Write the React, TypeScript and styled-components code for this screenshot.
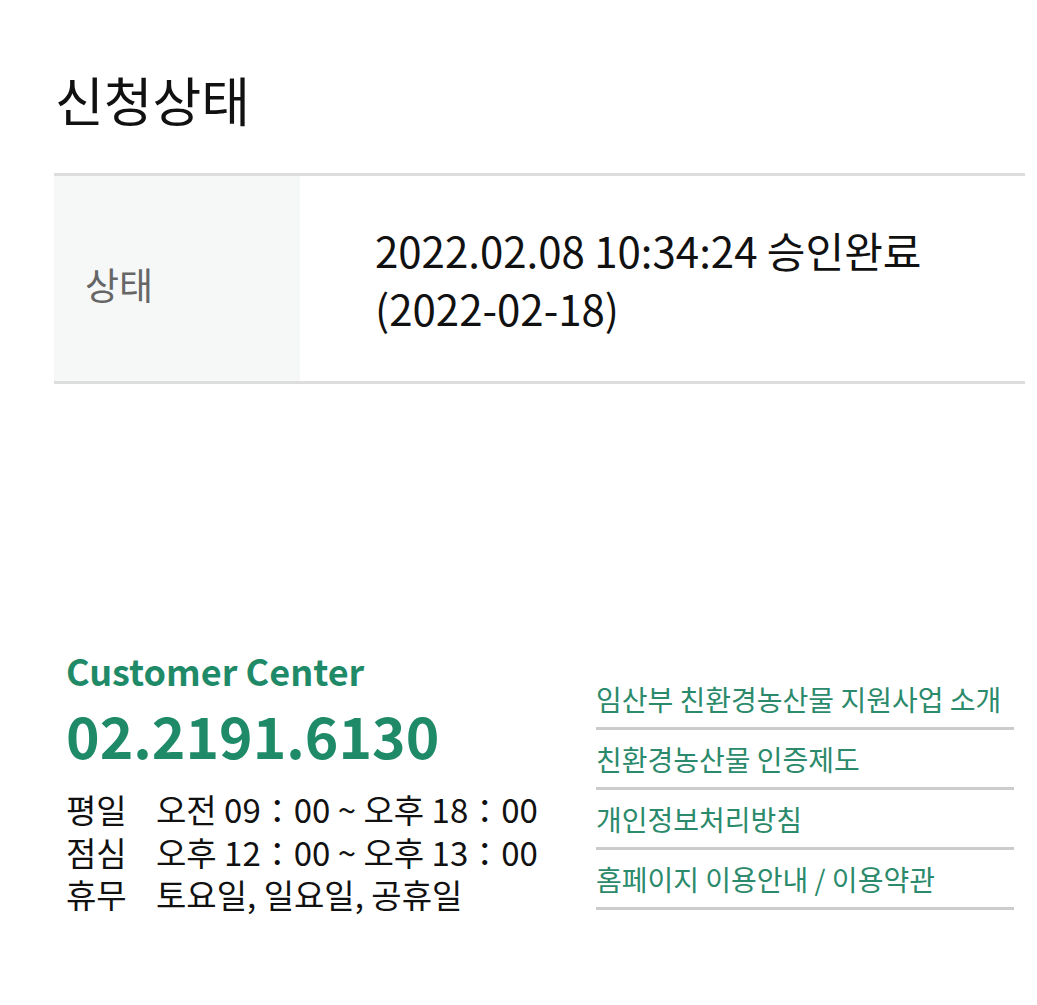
import React from 'react'
import styled, { createGlobalStyle } from 'styled-components'

const GlobalStyle = createGlobalStyle`
  body {
    margin: 0;
    background: #fff;
    font-family: "Noto Sans CJK KR", "Noto Sans", sans-serif;
    color: #111;
  }
`

const links = [
  '임산부 친환경농산물 지원사업 소개',
  '친환경농산물 인증제도',
  '개인정보처리방침',
  '홈페이지 이용안내 / 이용약관',
]

const hours = [
  { label: '평일', value: '오전 09：00 ~ 오후 18：00' },
  { label: '점심', value: '오후 12：00 ~ 오후 13：00' },
  { label: '휴무', value: '토요일, 일요일, 공휴일' },
]

const App = () => {
  return (
    <>
      <GlobalStyle />
      <Page>
        <Title>신청상태</Title>
        <StatusTable>
          <LabelCell>상태</LabelCell>
          <ValueCell>
            2022.02.08 10:34:24 승인완료
            <br />
            (2022-02-18)
          </ValueCell>
        </StatusTable>

        <Footer>
          <Contact>
            <CenterName>Customer Center</CenterName>
            <Phone>02.2191.6130</Phone>
            <Hours>
              {hours.map((h) => (
                <React.Fragment key={h.label}>
                  <dt>{h.label}</dt>
                  <dd>{h.value}</dd>
                </React.Fragment>
              ))}
            </Hours>
          </Contact>
          <LinkList>
            {links.map((l) => (
              <li key={l}>
                <a href="#">{l}</a>
              </li>
            ))}
          </LinkList>
        </Footer>
      </Page>
    </>
  )
}

export default App

const Page = styled.div`
  padding: 69px 12px 40px 54px;
`

const Title = styled.h1`
  margin: 0 0 44px 1px;
  font-size: 53px;
  line-height: 60px;
  font-weight: 400;
  color: #111;
`

const StatusTable = styled.div`
  display: flex;
  border-top: 3px solid #dddddd;
  border-bottom: 3px solid #dddddd;
  height: 205px;
`

const LabelCell = styled.div`
  width: 246px;
  flex-shrink: 0;
  background: #f5f8f7;
  display: flex;
  align-items: center;
  padding: 10px 0 0 31px;
  box-sizing: border-box;
  font-size: 37px;
  color: #666;
`

const ValueCell = styled.div`
  display: flex;
  flex-direction: column;
  justify-content: center;
  padding-left: 75px;
  font-size: 42px;
  line-height: 58px;
  color: #111;
`

const Footer = styled.div`
  display: flex;
  justify-content: space-between;
  align-items: flex-start;
  margin-top: 264px;
  padding: 0 11px 0 12px;
`

const Contact = styled.div`
  display: flex;
  flex-direction: column;
`

const CenterName = styled.div`
  font-size: 36px;
  line-height: 44px;
  font-weight: 700;
  color: #1f8a68;
`

const Phone = styled.div`
  margin-top: 10px;
  font-size: 57px;
  line-height: 64px;
  font-weight: 700;
  color: #1f8a68;
`

const Hours = styled.dl`
  display: grid;
  grid-template-columns: 90px auto;
  margin: 22px 0 0;
  font-size: 33px;
  line-height: 42.5px;
  color: #111;

  dt,
  dd {
    margin: 0;
  }
`

const LinkList = styled.ul`
  list-style: none;
  margin: 22px 0 0;
  padding: 0;
  width: 418px;

  li {
    height: 57px;
    display: flex;
    align-items: center;
    border-bottom: 3px solid #cccccc;
  }

  a {
    font-size: 28px;
    color: #2b8a6b;
    text-decoration: none;
  }
`
